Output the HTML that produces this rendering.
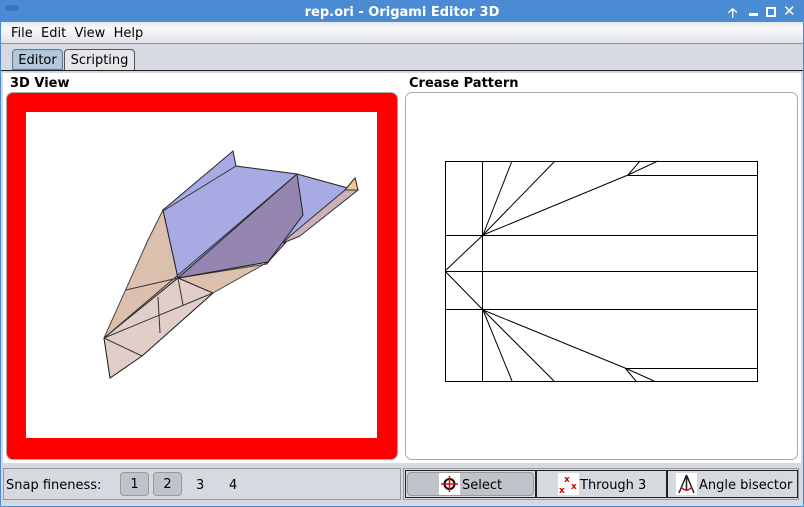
<!DOCTYPE html>
<html><head><style>
*{margin:0;padding:0;box-sizing:border-box}
body{width:804px;height:507px;overflow:hidden;background:#d6d9df;font-family:"DejaVu Sans","Liberation Sans",sans-serif;font-size:13px;color:#000;position:relative}
.abs{position:absolute}
</style></head><body>
<div class="abs" style="left:0;top:0;width:804px;height:507px;border:1px solid #4a88d0;border-top:none"></div>
<div class="abs" style="left:0;top:0;width:804px;height:22px;background:#4a8bd3;color:#fff;font-weight:bold;font-size:13px;text-align:center;line-height:25px">rep.ori - Origami Editor 3D</div>
<div class="abs" style="left:5px;top:5px;width:14px;height:6px;border-radius:50%;background:#2f6fb8;opacity:.8"></div>
<div class="abs" style="left:728px;top:4px;color:#fff;font-weight:bold;font-size:13px">🡡</div>
<div class="abs" style="left:749px;top:13px;width:9px;height:3px;background:#fff"></div>
<div class="abs" style="left:766px;top:7px;width:10px;height:10px;border:2px solid #fff"></div>
<div class="abs" style="left:783px;top:2px;color:#fff;font-weight:bold;font-size:15px">✕</div>
<div class="abs" style="left:1px;top:22px;width:802px;height:22px;background:linear-gradient(#e6e8ec,#fafafa 30%,#e0e2e6);border-bottom:1px solid #8a92a0"></div>
<div class="abs" style="left:11px;top:26px;font-size:13px">File&nbsp; Edit&nbsp; View&nbsp; Help</div>
<div class="abs" style="left:12px;top:49px;width:51px;height:21px;background:#b4c8dc;border:1px solid #6a7c92;border-radius:4px 4px 0 0;box-shadow:inset 0 0 0 1px #9fc0e0;text-align:center;line-height:21px">Editor</div>
<div class="abs" style="left:64px;top:49px;width:71px;height:21px;background:#e4e6ea;border:1px solid #555;border-bottom:none;border-radius:4px 4px 0 0;text-align:center;line-height:21px">Scripting</div>
<div class="abs" style="left:1px;top:70px;width:802px;height:2px;border-top:1px solid #222;background:#c8d4e4"></div>
<div class="abs" style="left:3px;top:73px;width:798px;height:390px;background:#fff"></div>
<div class="abs" style="left:10px;top:76px;font-weight:bold;font-size:13px">3D View</div>
<div class="abs" style="left:409px;top:76px;font-weight:bold;font-size:13px">Crease Pattern</div>
<div class="abs" style="left:6px;top:92px;width:392px;height:368px;border:1px solid #aaa;border-radius:7px;background:#f00"></div>
<div class="abs" style="left:26px;top:112px;width:351px;height:326px;background:#fff"></div>
<div class="abs" style="left:405px;top:92px;width:393px;height:368px;border:1px solid #aaa;border-radius:7px;background:#fff"></div>
<svg class="abs" style="left:0;top:0" width="804" height="507">
<g stroke="#000" stroke-width="1" fill="none">
<polygon points="148,240 163,210 178,278 267,264 282,243 300,236 285,240 268,262 213,293 142,356 110,378 104,338" fill="#dcc0ae" stroke="#444"/>
<polygon points="163,210 233,151 236,166 297,174 355,190 288,240 268,262 178,278" fill="#a8aae4" stroke="#222"/>
<polygon points="297,174 303,215 268,262 178,278" fill="#9486b0" stroke="#222"/>
<polygon points="355,178 358,190 300,236 283,243 290,236 345,190" fill="#ccb0bc" stroke="#333"/>
<polygon points="345,190 355,178 358,190" fill="#f0c890" stroke="#333"/>
<polygon points="104,338 178,278 213,293 142,356 110,378" fill="#e2cec8" stroke="#222"/>
<path d="M104,338 L297,174 M104,338 L213,293 M104,338 L142,356 M126,290 L178,278 L183,305 M158,297 L160,333 M236,166 L163,211" stroke="#333"/>
<rect x="445.5" y="161.5" width="312" height="220"/>
<path d="M482.5,161 V381 M445,235.5 H757 M445,271.5 H757 M445,309.5 H757 M445,271 L483,235 M445,271 L483,310 M483,235 L512,161 M483,235 L555,161 M483,235 L628,175 L658,161 M628,175 L640,161 M628,175.5 H757 M483,310 L512,381 M483,310 L554,381 M483,310 L625,368 L654,381 M625,368 L636,381 M625,368.5 H757"/>
</g>
</svg>
<div class="abs" style="left:3px;top:468px;width:398px;height:32px;border:1px solid #999"></div>
<div class="abs" style="left:6px;top:478px">Snap fineness:</div>
<div class="abs" style="left:120px;top:472px;width:29px;height:24px;background:#c0c3ca;border:1px solid #999;border-radius:4px;text-align:center;line-height:24px">1</div>
<div class="abs" style="left:153px;top:472px;width:29px;height:24px;background:#c0c3ca;border:1px solid #999;border-radius:4px;text-align:center;line-height:24px">2</div>
<div class="abs" style="left:196px;top:478px">3</div>
<div class="abs" style="left:229px;top:478px">4</div>
<div class="abs" style="left:403px;top:468px;width:396px;height:32px;border:1px solid #999"></div>
<div class="abs" style="left:405px;top:470px;width:131px;height:28px;border:1px solid #222;background:#d6d9df"></div>
<div class="abs" style="left:407px;top:472px;width:127px;height:24px;background:#c0c3ca;border:1px solid #999;border-radius:4px"></div>
<div class="abs" style="left:536px;top:470px;width:131px;height:28px;border:1px solid #222"></div>
<div class="abs" style="left:667px;top:470px;width:131px;height:28px;border:1px solid #222"></div>
<svg class="abs" style="left:439px;top:473px" width="21" height="22"><rect width="21" height="22" fill="#fff"/><circle cx="10.5" cy="11" r="5" stroke="#000" stroke-width="2" fill="none"/><path d="M2,11H19M10.5,3V19" stroke="#e00" stroke-width="1.5"/></svg>
<div class="abs" style="left:462px;top:478px">Select</div>
<svg class="abs" style="left:558px;top:473px" width="21" height="22"><rect width="21" height="22" fill="#fff"/><text x="6" y="9" font-size="9" fill="#c00" font-weight="bold" font-family="DejaVu Sans">x</text><text x="1" y="20" font-size="9" fill="#c00" font-weight="bold" font-family="DejaVu Sans">x</text><text x="13" y="16" font-size="9" fill="#c00" font-weight="bold" font-family="DejaVu Sans">x</text></svg>
<div class="abs" style="left:580px;top:478px">Through 3</div>
<svg class="abs" style="left:676px;top:473px" width="21" height="22"><rect width="21" height="22" fill="#fff"/><path d="M10.5,2 L3,20 M10.5,2 L18,20 M10.5,2 V18" stroke="#222" stroke-width="1.5" fill="none"/><path d="M5,14 Q10.5,20 16,14" stroke="#e00" stroke-width="1.5" fill="none"/></svg>
<div class="abs" style="left:699px;top:478px">Angle bisector</div>
</body></html>
